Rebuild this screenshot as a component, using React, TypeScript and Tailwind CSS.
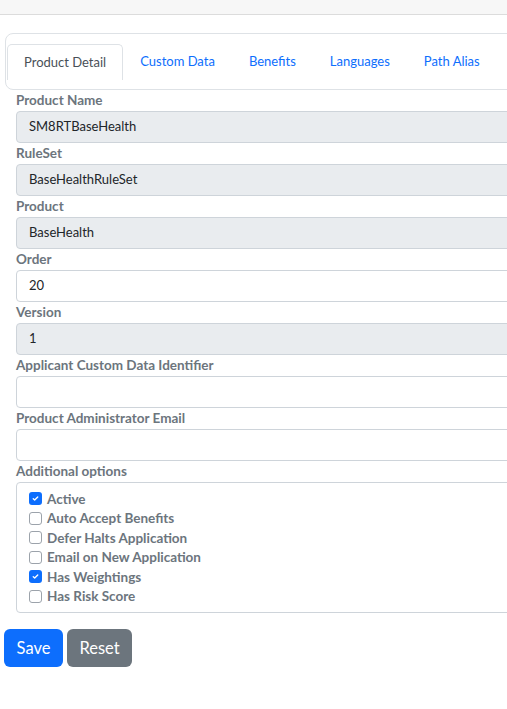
import React from 'react';

const font = { fontFamily: 'Lato, "Noto Sans", sans-serif' };

const tabs = ['Product Detail', 'Custom Data', 'Benefits', 'Languages', 'Path Alias'];

const fields = [
    { label: 'Product Name', value: 'SM8RTBaseHealth', disabled: true },
    { label: 'RuleSet', value: 'BaseHealthRuleSet', disabled: true },
    { label: 'Product', value: 'BaseHealth', disabled: true },
    { label: 'Order', value: '20', disabled: false },
    { label: 'Version', value: '1', disabled: true },
    { label: 'Applicant Custom Data Identifier', value: '', disabled: false },
    { label: 'Product Administrator Email', value: '', disabled: false },
];

const options = [
    { label: 'Active', checked: true },
    { label: 'Auto Accept Benefits', checked: false },
    { label: 'Defer Halts Application', checked: false },
    { label: 'Email on New Application', checked: false },
    { label: 'Has Weightings', checked: true },
    { label: 'Has Risk Score', checked: false },
];

const Check: React.FC<{ checked: boolean }> = ({ checked }) =>
    checked ? (
        <span className="flex h-[13px] w-[13px] items-center justify-center rounded-[3px] bg-[#0d6efd]">
            <svg width="9" height="9" viewBox="0 0 20 20">
                <path d="M5 10.5l3.2 3L15 6.5" fill="none" stroke="#fff" strokeWidth="3" strokeLinecap="round" strokeLinejoin="round" />
            </svg>
        </span>
    ) : (
        <span className="h-[13px] w-[13px] rounded-[3px] border border-[#9ca3ab] bg-white" />
    );

export default function App() {
    return (
        <div className="min-h-screen overflow-hidden bg-white" style={font}>
            <div className="h-[15px] border-b border-[#dcdcdc] bg-[#f7f7f7]" />

            <div className="pl-[5px] pt-[18px]">
                <div className="flex w-[640px] rounded-[8px] border border-[#dee2e6] px-px pb-[9px] pt-[10px]">
                    {tabs.map((t, i) => (
                        <div
                            key={t}
                            className={
                                i === 0
                                    ? 'flex h-[36px] items-center rounded-t-[5px] border border-b-0 border-[#dee2e6] px-4 text-[13px] text-[#495057]'
                                    : 'flex h-[36px] items-center border border-transparent px-4 text-[13px] text-[#0d6efd]'
                            }
                        >
                            {t}
                        </div>
                    ))}
                </div>
            </div>

            <div className="pl-4">
                {fields.map((f) => (
                    <div key={f.label}>
                        <div className="h-[21px] text-[13.5px] font-bold leading-[20px] text-[#6c757d]">{f.label}</div>
                        <div
                            className={`flex h-[32px] w-[620px] items-center rounded-[4px] border border-[#ced4da] px-3 text-[13px] text-[#212529] ${
                                f.disabled ? 'bg-[#e9ecef]' : 'bg-white'
                            }`}
                        >
                            {f.value}
                        </div>
                    </div>
                ))}

                <div className="h-[21px] text-[13.5px] font-bold leading-[20px] text-[#6c757d]">Additional options</div>
                <div className="w-[620px] rounded-[4px] border border-[#ced4da] px-3 pb-[6px] pt-[6px]">
                    {options.map((o) => (
                        <div key={o.label} className="flex h-[19.5px] items-center gap-[5px]">
                            <Check checked={o.checked} />
                            <span className="text-[13.5px] font-bold text-[#6c757d]">{o.label}</span>
                        </div>
                    ))}
                </div>
            </div>

            <div className="flex gap-1 pl-1 pt-4">
                <button className="h-[38px] w-[59px] rounded-[6px] bg-[#0d6efd] text-[16.5px] text-white">Save</button>
                <button className="h-[38px] w-[65px] rounded-[6px] bg-[#6c757d] text-[16.5px] text-white">Reset</button>
            </div>
        </div>
    );
}
